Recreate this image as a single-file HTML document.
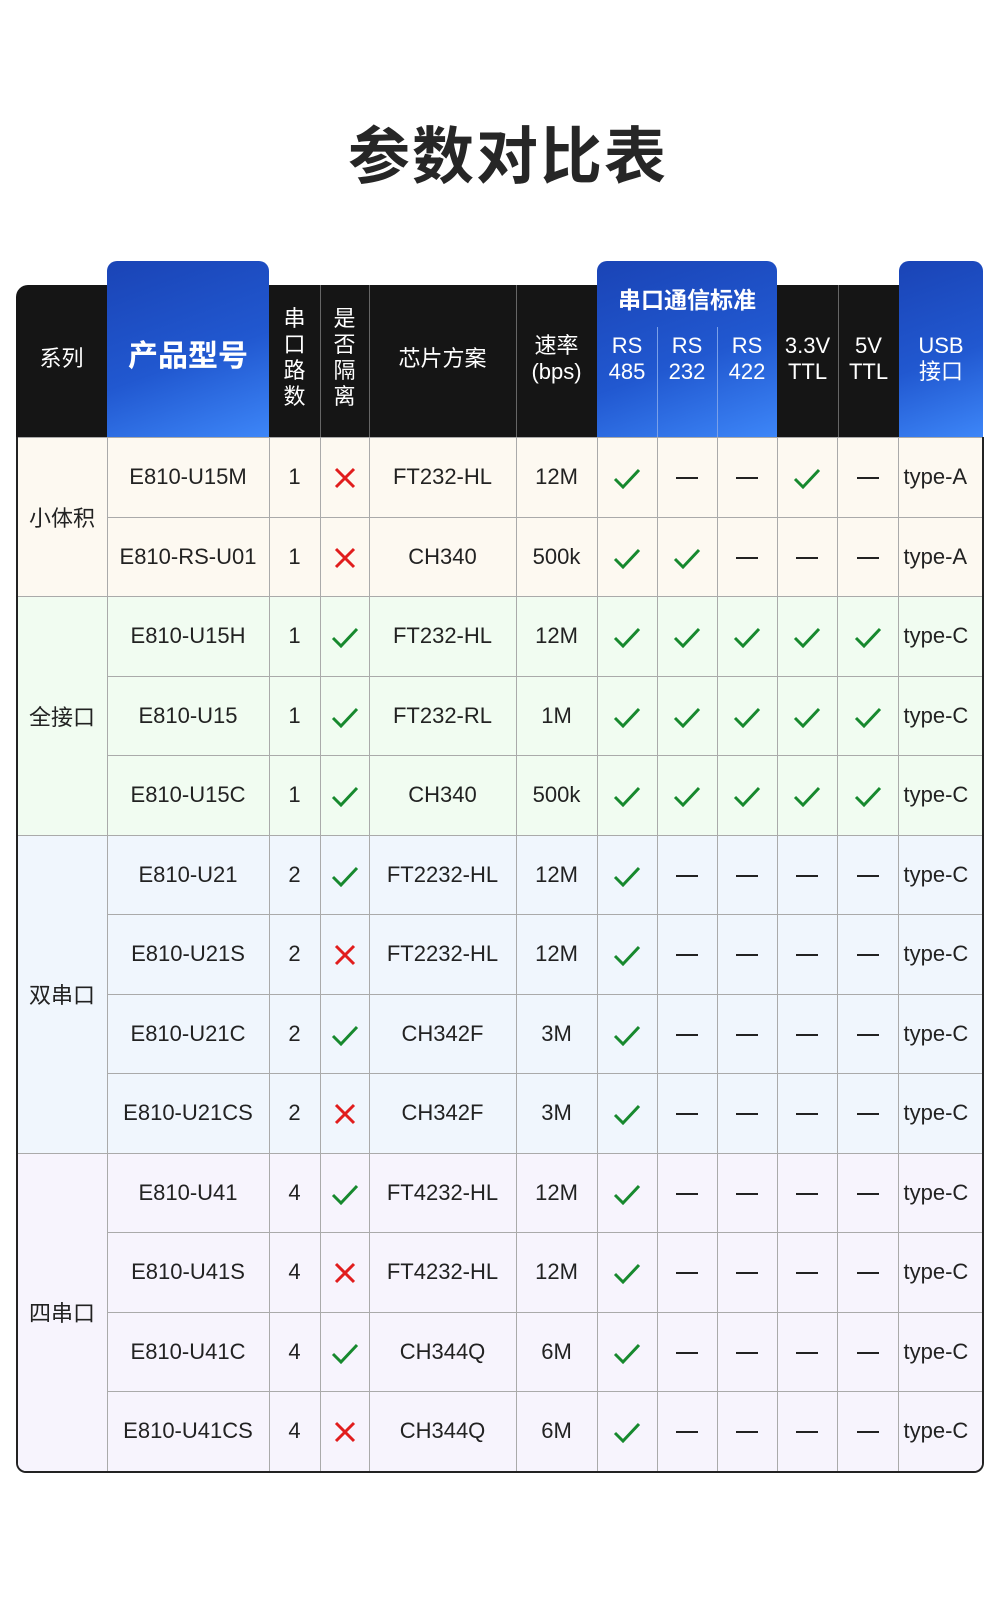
<!DOCTYPE html>
<html><head><meta charset="utf-8">
<style>
*{margin:0;padding:0;box-sizing:border-box}
body{width:1000px;height:1597px;background:#fff;position:relative;font-family:"Liberation Sans","Noto Sans CJK SC",sans-serif;color:#222;overflow:hidden}
.title{position:absolute;left:16px;width:984px;top:106px;text-align:center;font-size:62px;font-weight:bold;color:#262626;letter-spacing:2px;font-family:"Noto Sans CJK SC",sans-serif}
.hdr{position:absolute;left:16px;top:285px;width:967px;height:152px;background:#151515;border-radius:12px 12px 0 0}
.blue{position:absolute;top:261px;height:176px;border-radius:10px 10px 0 0;background:linear-gradient(160deg,#1a44b6 0%,#2158d0 55%,#3d86f8 100%)}
.vl{position:absolute;width:1px;background:#666}
.vlb{position:absolute;width:1px;background:#7aa0e8}
.ht{position:absolute;color:#fff;text-align:center;font-size:22px;line-height:26px}
.wrap{position:absolute;left:16px;top:437px;width:968px;height:1036px;border:2px solid #222;border-top:none;border-radius:0 0 10px 10px;overflow:hidden}
table{border-collapse:collapse;table-layout:fixed;width:964px}
td{border:1px solid #aaa;height:79.5px;text-align:center;font-size:22px;padding:0;vertical-align:middle}
tr td:first-child{border-left:none}
tr td:last-child{border-right:none}
td.s{text-align:left;padding-left:11px}
.a td{background:#fdf9f1}.b td{background:#f1fcf1}.c td{background:#f0f6fd}.d td{background:#f7f4fd}
svg{display:inline-block;vertical-align:middle}
.dash{display:inline-block;width:22px;height:2px;background:#222;vertical-align:middle}
td.t{text-align:left;padding-left:5px}
</style></head><body>
<div class="title">参数对比表</div>
<div class="hdr"></div>
<div class="blue" style="left:107px;width:162px"></div>
<div class="blue" style="left:597px;width:180px"></div>
<div class="blue" style="left:899px;width:84px"></div>
<div class="vl" style="left:320px;top:285px;height:152px"></div>
<div class="vl" style="left:369px;top:285px;height:152px"></div>
<div class="vl" style="left:516px;top:285px;height:152px"></div>
<div class="vl" style="left:838px;top:285px;height:152px"></div>
<div class="vlb" style="left:657px;top:327px;height:110px"></div>
<div class="vlb" style="left:717px;top:327px;height:110px"></div>
<div class="ht" style="left:16px;width:91px;top:346px">系列</div>
<div class="ht" style="left:107px;width:162px;top:340px;font-size:30px;line-height:34px;font-weight:bold">产品型号</div>
<div class="ht" style="left:269px;width:51px;top:306px">串<br>口<br>路<br>数</div>
<div class="ht" style="left:320px;width:49px;top:306px">是<br>否<br>隔<br>离</div>
<div class="ht" style="left:369px;width:147px;top:346px">芯片方案</div>
<div class="ht" style="left:516px;width:81px;top:333px">速率<br>(bps)</div>
<div class="ht" style="left:597px;width:180px;top:287px;font-size:23px;font-weight:bold">串口通信标准</div>
<div class="ht" style="left:597px;width:60px;top:333px">RS<br>485</div>
<div class="ht" style="left:657px;width:60px;top:333px">RS<br>232</div>
<div class="ht" style="left:717px;width:60px;top:333px">RS<br>422</div>
<div class="ht" style="left:777px;width:61px;top:333px">3.3V<br>TTL</div>
<div class="ht" style="left:838px;width:61px;top:333px">5V<br>TTL</div>
<div class="ht" style="left:899px;width:84px;top:333px">USB<br>接口</div>
<div class="wrap">
<table>
<colgroup><col style="width:89px"><col style="width:162px"><col style="width:51px"><col style="width:49px"><col style="width:147px"><col style="width:81px"><col style="width:60px"><col style="width:60px"><col style="width:60px"><col style="width:60px"><col style="width:61px"><col style="width:84px"></colgroup>
<tbody>
<tr class="a"><td class="s" rowspan="2">小体积</td><td>E810-U15M</td><td>1</td><td>X</td><td>FT232-HL</td><td>12M</td><td>C</td><td>D</td><td>D</td><td>C</td><td>D</td><td class="t">type-A</td></tr>
<tr class="a"><td>E810-RS-U01</td><td>1</td><td>X</td><td>CH340</td><td>500k</td><td>C</td><td>C</td><td>D</td><td>D</td><td>D</td><td class="t">type-A</td></tr>
<tr class="b"><td class="s" rowspan="3">全接口</td><td>E810-U15H</td><td>1</td><td>C</td><td>FT232-HL</td><td>12M</td><td>C</td><td>C</td><td>C</td><td>C</td><td>C</td><td class="t">type-C</td></tr>
<tr class="b"><td>E810-U15</td><td>1</td><td>C</td><td>FT232-RL</td><td>1M</td><td>C</td><td>C</td><td>C</td><td>C</td><td>C</td><td class="t">type-C</td></tr>
<tr class="b"><td>E810-U15C</td><td>1</td><td>C</td><td>CH340</td><td>500k</td><td>C</td><td>C</td><td>C</td><td>C</td><td>C</td><td class="t">type-C</td></tr>
<tr class="c"><td class="s" rowspan="4">双串口</td><td>E810-U21</td><td>2</td><td>C</td><td>FT2232-HL</td><td>12M</td><td>C</td><td>D</td><td>D</td><td>D</td><td>D</td><td class="t">type-C</td></tr>
<tr class="c"><td>E810-U21S</td><td>2</td><td>X</td><td>FT2232-HL</td><td>12M</td><td>C</td><td>D</td><td>D</td><td>D</td><td>D</td><td class="t">type-C</td></tr>
<tr class="c"><td>E810-U21C</td><td>2</td><td>C</td><td>CH342F</td><td>3M</td><td>C</td><td>D</td><td>D</td><td>D</td><td>D</td><td class="t">type-C</td></tr>
<tr class="c"><td>E810-U21CS</td><td>2</td><td>X</td><td>CH342F</td><td>3M</td><td>C</td><td>D</td><td>D</td><td>D</td><td>D</td><td class="t">type-C</td></tr>
<tr class="d"><td class="s" rowspan="4">四串口</td><td>E810-U41</td><td>4</td><td>C</td><td>FT4232-HL</td><td>12M</td><td>C</td><td>D</td><td>D</td><td>D</td><td>D</td><td class="t">type-C</td></tr>
<tr class="d"><td>E810-U41S</td><td>4</td><td>X</td><td>FT4232-HL</td><td>12M</td><td>C</td><td>D</td><td>D</td><td>D</td><td>D</td><td class="t">type-C</td></tr>
<tr class="d"><td>E810-U41C</td><td>4</td><td>C</td><td>CH344Q</td><td>6M</td><td>C</td><td>D</td><td>D</td><td>D</td><td>D</td><td class="t">type-C</td></tr>
<tr class="d"><td>E810-U41CS</td><td>4</td><td>X</td><td>CH344Q</td><td>6M</td><td>C</td><td>D</td><td>D</td><td>D</td><td>D</td><td class="t">type-C</td></tr>
</tbody></table></div>
<script>
var C='<svg width="28" height="22" viewBox="0 0 28 22"><path d="M2 12 L10 20 L26 3" fill="none" stroke="#17892e" stroke-width="3"/></svg>';
var X='<svg width="22" height="22" viewBox="0 0 22 22"><path d="M2 2 L20 20 M20 2 L2 20" fill="none" stroke="#e11d1d" stroke-width="3"/></svg>';
var D='<span class="dash"></span>';
document.querySelectorAll('td').forEach(function(t){var s=t.textContent;if(s==='C')t.innerHTML=C;else if(s==='X')t.innerHTML=X;else if(s==='D')t.innerHTML=D;});
</script>
</body></html>
